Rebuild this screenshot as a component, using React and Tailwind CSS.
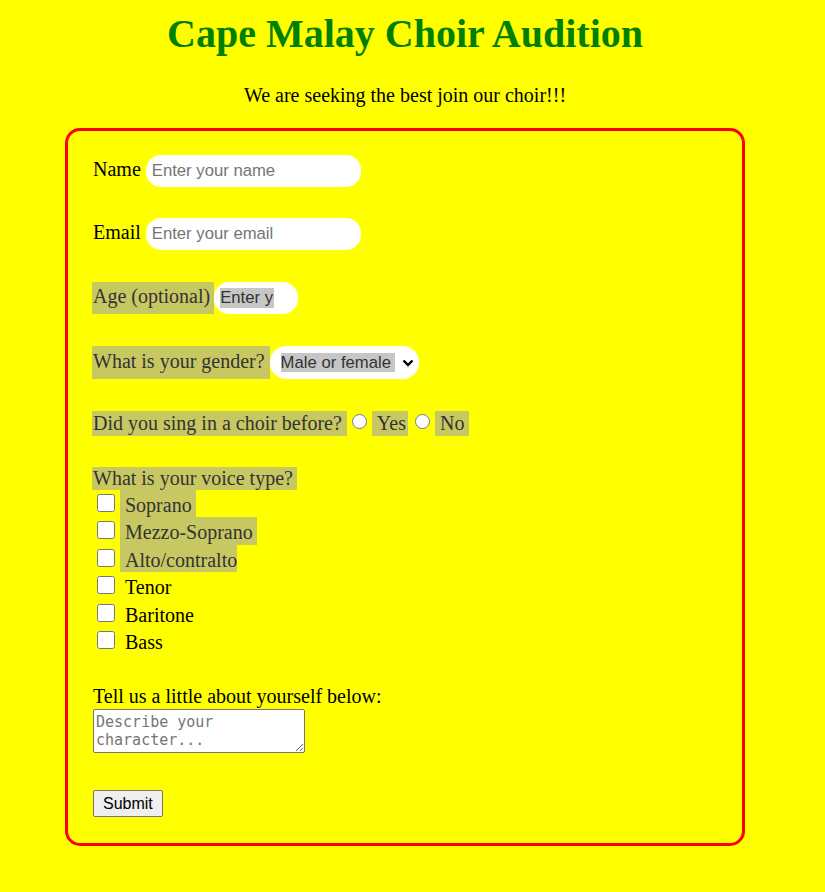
const hl = "bg-[#c8c863] text-[#333]";
const sans = "font-['Liberation_Sans',Arial,sans-serif] text-[16.7px]";

const TextRow = ({ label, placeholder }) => (
  <div className="flex h-[32px] items-start">
    <span className="h-full pt-[3px] pr-[5px] leading-[22px]">{label}</span>
    <input
      type="text"
      placeholder={placeholder}
      className={`h-[32px] w-[215px] rounded-[15px] bg-white pl-[6px] ${sans} text-black outline-none placeholder:text-[#757575]`}
    />
  </div>
);

const voices = [
  { name: "Soprano", sel: true, pr: "pr-[4px]" },
  { name: "Mezzo-Soprano", sel: true, pr: "pr-[4px]" },
  { name: "Alto/contralto", sel: true, pr: "pr-0" },
  { name: "Tenor" },
  { name: "Baritone" },
  { name: "Bass" },
];

const VoiceRow = ({ voice }) => (
  <div className="flex h-[27.4px] items-start">
    <input type="checkbox" className="m-0 mt-[4px] ml-[4px] h-[18px] w-[18px]" />
    <span
      className={`ml-[5px] h-full pt-[4px] pl-[5px] leading-[22px] ${voice.pr || ""} ${voice.sel ? hl : ""}`}
    >
      {voice.name}
    </span>
  </div>
);

export default function App() {
  return (
    <div className="min-h-screen w-full bg-[#ffff00] font-['Liberation_Serif','Times_New_Roman',serif] text-[20px] text-black">
      <div className="w-[810px] pb-[48px]">
        <h1 className="pt-[12px] text-center text-[40px] leading-[44px] font-bold text-[#008000]">
          Cape Malay Choir Audition
        </h1>
        <p className="mt-[28px] text-center leading-[22px]">We are seeking the best join our choir!!!</p>

        <form
          onSubmit={(e) => e.preventDefault()}
          className="mt-[22px] ml-[65px] w-[680px] rounded-[15px] border-[3px] border-[#ff0000] px-[25px] pt-[24px] pb-[26px]"
        >
          <TextRow label="Name" placeholder="Enter your name" />
          <div className="mt-[31px]">
            <TextRow label="Email" placeholder="Enter your email" />
          </div>

          {/* Age */}
          <div className="mt-[32px] flex h-[32px] items-start">
            <span className={`-ml-[1px] h-full pt-[3px] pr-[4px] pl-[1px] leading-[22px] ${hl}`}>
              Age (optional)
            </span>
            <div className="flex h-[32px] w-[84px] items-center rounded-[15px] bg-white pl-[6px]">
              <span className={`w-[54px] overflow-hidden whitespace-nowrap bg-[#c6c6c6] ${sans} leading-[20px] text-[#333]`}>
                Enter y
              </span>
            </div>
          </div>

          {/* Gender */}
          <div className="mt-[32px] flex h-[33px] items-start">
            <span className={`-ml-[1px] h-full pt-[4px] pr-[5px] pl-[1px] leading-[22px] ${hl}`}>
              What is your gender?
            </span>
            <div className="flex h-[33px] w-[149px] items-center rounded-[16px] bg-white pl-[11px]">
              <span className={`bg-[#c6c6c6] pr-[4px] ${sans} leading-[19px] text-[#333]`}>
                Male or female
              </span>
              <svg className="mr-[5px] ml-auto" width="12" height="8" viewBox="0 0 12 8">
                <polyline points="1.5,1.5 6,6 10.5,1.5" fill="none" stroke="#000" strokeWidth="2.4" />
              </svg>
            </div>
          </div>

          {/* Choir before */}
          <div className="mt-[32px] flex h-[25px] items-start">
            <span className={`-ml-[1px] h-full pr-[5px] pl-[1px] leading-[25px] ${hl}`}>
              Did you sing in a choir before?
            </span>
            <input type="radio" name="before" className="m-0 mt-[3px] ml-[5px] h-[15px] w-[15px]" />
            <span className={`ml-[5px] h-full pr-[2px] pl-[5px] leading-[25px] ${hl}`}>Yes</span>
            <input type="radio" name="before" className="m-0 mt-[3px] ml-[7px] h-[15px] w-[15px]" />
            <span className={`ml-[5px] h-full pr-[5px] pl-[5px] leading-[25px] ${hl}`}>No</span>
          </div>

          {/* Voice type */}
          <div className="mt-[31px]">
            <span className={`-ml-[1px] block h-[23px] w-fit pr-[4px] pl-[1px] leading-[23px] ${hl}`}>
              What is your voice type?
            </span>
            {voices.map((v) => (
              <VoiceRow key={v.name} voice={v} />
            ))}
          </div>

          {/* About */}
          <div className="mt-[31px] leading-[22px]">Tell us a little about yourself below:</div>
          <textarea
            placeholder="Describe your character..."
            className="mt-[2px] block h-[44px] w-[212px] rounded-[2px] border border-[#767676] bg-white px-[2px] pt-[3px] font-['DejaVu_Sans_Mono',monospace] text-[15px] leading-[18px] placeholder:text-[#757575]"
          />

          <button
            type="submit"
            className="mt-[37px] block h-[27px] rounded-[2px] border border-[#767676] bg-[#efefef] px-[9px] font-['Liberation_Sans',Arial,sans-serif] text-[16px] leading-[18px] text-black"
          >
            Submit
          </button>
        </form>
      </div>
    </div>
  );
}
